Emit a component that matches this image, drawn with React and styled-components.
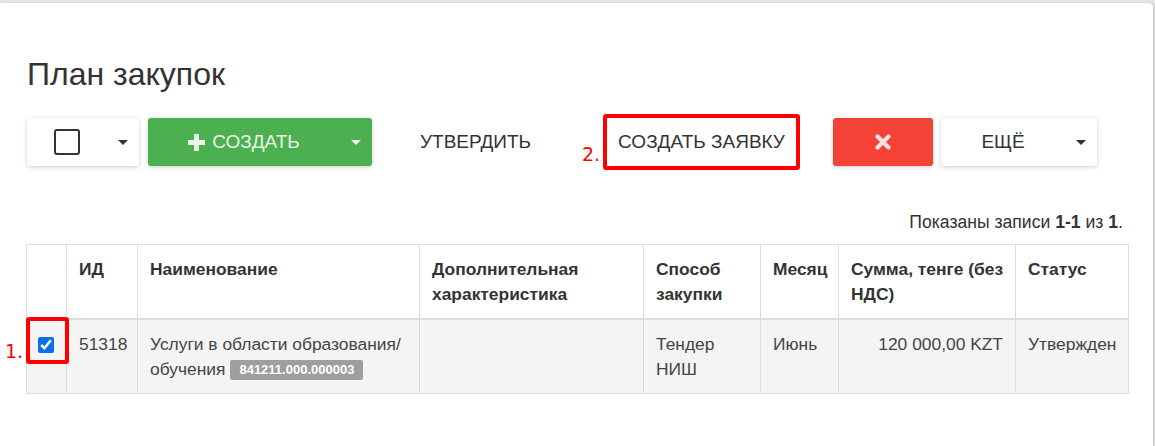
import React from 'react';
import styled, { createGlobalStyle } from 'styled-components';

const GlobalStyle = createGlobalStyle`
  body {
    margin: 0;
    background: #e6e6e6;
    font-family: "Liberation Sans", Arial, sans-serif;
    color: #333;
  }
`;

const Card = styled.div`
  margin: 3px 2px 0 0;
  height: 443px;
  box-sizing: border-box;
  background: #fff;
  border-top-right-radius: 4px;
  box-shadow: 1px 0 2px rgba(0, 0, 0, 0.18);
  padding: 51px 25px 0 26px;
`;

const Title = styled.h1`
  margin: 0 0 24px 1px;
  font-size: 32px;
  line-height: 40px;
  font-weight: normal;
  color: #333;
`;

const Toolbar = styled.div`
  display: flex;
  align-items: center;
  height: 48px;
  padding-left: 1px;
`;

const RaisedButton = styled.div`
  display: flex;
  align-items: stretch;
  height: 48px;
  width: ${(p) => p.$width}px;
  margin-left: ${(p) => p.$gap || 0}px;
  box-sizing: border-box;
  border-radius: 3px;
  background: ${(p) => p.$bg || '#fff'};
  color: ${(p) => p.$fg || '#333'};
  box-shadow: 0 1px 4px rgba(0, 0, 0, 0.2);
  font-size: 19px;
  text-transform: uppercase;
`;

const ButtonMain = styled.div`
  flex: 1;
  display: flex;
  align-items: center;
  justify-content: center;
  gap: 7px;
`;

const CaretPart = styled.div`
  width: 32px;
  display: flex;
  align-items: center;
  justify-content: center;
`;

const Caret = styled.span`
  width: 0;
  height: 0;
  border-top: 5px solid ${(p) => p.$color || '#333'};
  border-left: 5px solid transparent;
  border-right: 5px solid transparent;
`;

const EmptyBox = styled.span`
  width: 26px;
  height: 26px;
  box-sizing: border-box;
  border: 2px solid #333;
  border-radius: 3px;
`;

const FlatButton = styled.div`
  height: 48px;
  width: ${(p) => p.$width}px;
  margin-left: ${(p) => p.$gap || 0}px;
  display: flex;
  align-items: center;
  justify-content: center;
  font-size: 19px;
  color: #333;
  text-transform: uppercase;
`;

const Marked = styled.div`
  position: relative;
  margin-left: ${(p) => p.$gap || 0}px;
  border: 4px solid #ff0000;
  border-radius: 3px;
`;

const MarkLabel = styled.span`
  position: absolute;
  left: ${(p) => p.$left}px;
  top: ${(p) => p.$top}px;
  font-family: "DejaVu Sans", "Liberation Sans", sans-serif;
  font-size: 19px;
  line-height: 20px;
  color: #ff0000;
`;

const Info = styled.div`
  margin: 44px 5px 9px 0;
  text-align: right;
  font-size: 17.6px;
  line-height: 25px;
  color: #333;
  b {
    font-weight: bold;
  }
`;

const Table = styled.table`
  width: 1102px;
  table-layout: fixed;
  border-collapse: collapse;
  font-size: 17.4px;
  line-height: 25px;
  color: #333;
`;

const Th = styled.th`
  border: 1px solid #ddd;
  border-bottom: 2px solid #ddd;
  padding: 12px 4px 11px 12px;
  text-align: left;
  vertical-align: top;
  font-weight: bold;
  color: #333;
`;

const Row = styled.tr`
  background: #f4f4f4;
`;

const Td = styled.td`
  position: relative;
  border: 1px solid #ddd;
  padding: 12px 12px 11px;
  vertical-align: top;
  text-align: ${(p) => p.$align || 'left'};
  color: #444;
`;

const Check = styled.input`
  display: block;
  margin: 5px 0 0 -1px;
  width: 16px;
  height: 16px;
  accent-color: #0b6fe8;
`;

const CellMark = styled.div`
  position: absolute;
  left: -1px;
  top: -3px;
  width: 43px;
  height: 47px;
  box-sizing: border-box;
  border: 4px solid #ff0000;
  border-radius: 3px;
`;

const Badge = styled.span`
  display: inline-block;
  margin-left: 5px;
  padding: 0 9px;
  background: #9e9e9e;
  color: #fff;
  font-size: 13px;
  line-height: 20px;
  font-weight: bold;
  border-radius: 2px;
  vertical-align: 1px;
`;

const PlusIcon = () => (
  <svg width="17" height="17" viewBox="0 0 17 17">
    <path d="M6 0h5v6h6v5h-6v6H6v-6H0V6h6z" fill="rgba(255,255,255,0.88)" />
  </svg>
);

const TimesIcon = () => (
  <svg width="16" height="16" viewBox="0 0 16 16">
    <path
      d="M2.5 2.5L13.5 13.5M13.5 2.5L2.5 13.5"
      stroke="rgba(255,255,255,0.85)"
      strokeWidth="4.2"
      strokeLinecap="round"
    />
  </svg>
);

const columns = [
  { title: '', width: 40 },
  { title: 'ИД', width: 71 },
  { title: 'Наименование', width: 282 },
  { title: 'Дополнительная характеристика', width: 224 },
  { title: 'Способ закупки', width: 117 },
  { title: 'Месяц', width: 78 },
  { title: 'Сумма, тенге (без НДС)', width: 177 },
  { title: 'Статус', width: 113 },
];

export default function App() {
  return (
    <>
      <GlobalStyle />
      <Card>
        <Title>План закупок</Title>
        <Toolbar>
          <RaisedButton $width={112}>
            <ButtonMain>
              <EmptyBox />
            </ButtonMain>
            <CaretPart>
              <Caret />
            </CaretPart>
          </RaisedButton>
          <RaisedButton $width={224} $gap={9} $bg="#4caf50" $fg="rgba(255,255,255,0.9)">
            <ButtonMain>
              <PlusIcon />
              Создать
            </ButtonMain>
            <CaretPart>
              <Caret $color="rgba(255,255,255,0.9)" />
            </CaretPart>
          </RaisedButton>
          <FlatButton $width={191} $gap={8}>Утвердить</FlatButton>
          <Marked $gap={32}>
            <MarkLabel $left={-25} $top={26}>2.</MarkLabel>
            <FlatButton $width={189}>Создать заявку</FlatButton>
          </Marked>
          <RaisedButton $width={100} $gap={33} $bg="#f44336">
            <ButtonMain>
              <TimesIcon />
            </ButtonMain>
          </RaisedButton>
          <RaisedButton $width={156} $gap={8}>
            <ButtonMain>Ещё</ButtonMain>
            <CaretPart>
              <Caret />
            </CaretPart>
          </RaisedButton>
        </Toolbar>
        <Info>
          Показаны записи <b>1-1</b> из <b>1</b>.
        </Info>
        <Table>
          <colgroup>
            {columns.map((c, i) => (
              <col key={i} style={{ width: c.width }} />
            ))}
          </colgroup>
          <thead>
            <tr>
              {columns.map((c, i) => (
                <Th key={i}>{c.title}</Th>
              ))}
            </tr>
          </thead>
          <tbody>
            <Row>
              <Td>
                <CellMark>
                  <MarkLabel $left={-25} $top={20}>1.</MarkLabel>
                </CellMark>
                <Check type="checkbox" checked readOnly />
              </Td>
              <Td>51318</Td>
              <Td>
                Услуги в области образования/ обучения
                <Badge>841211.000.000003</Badge>
              </Td>
              <Td />
              <Td>Тендер НИШ</Td>
              <Td>Июнь</Td>
              <Td $align="right">120 000,00 KZT</Td>
              <Td>Утвержден</Td>
            </Row>
          </tbody>
        </Table>
      </Card>
    </>
  );
}
